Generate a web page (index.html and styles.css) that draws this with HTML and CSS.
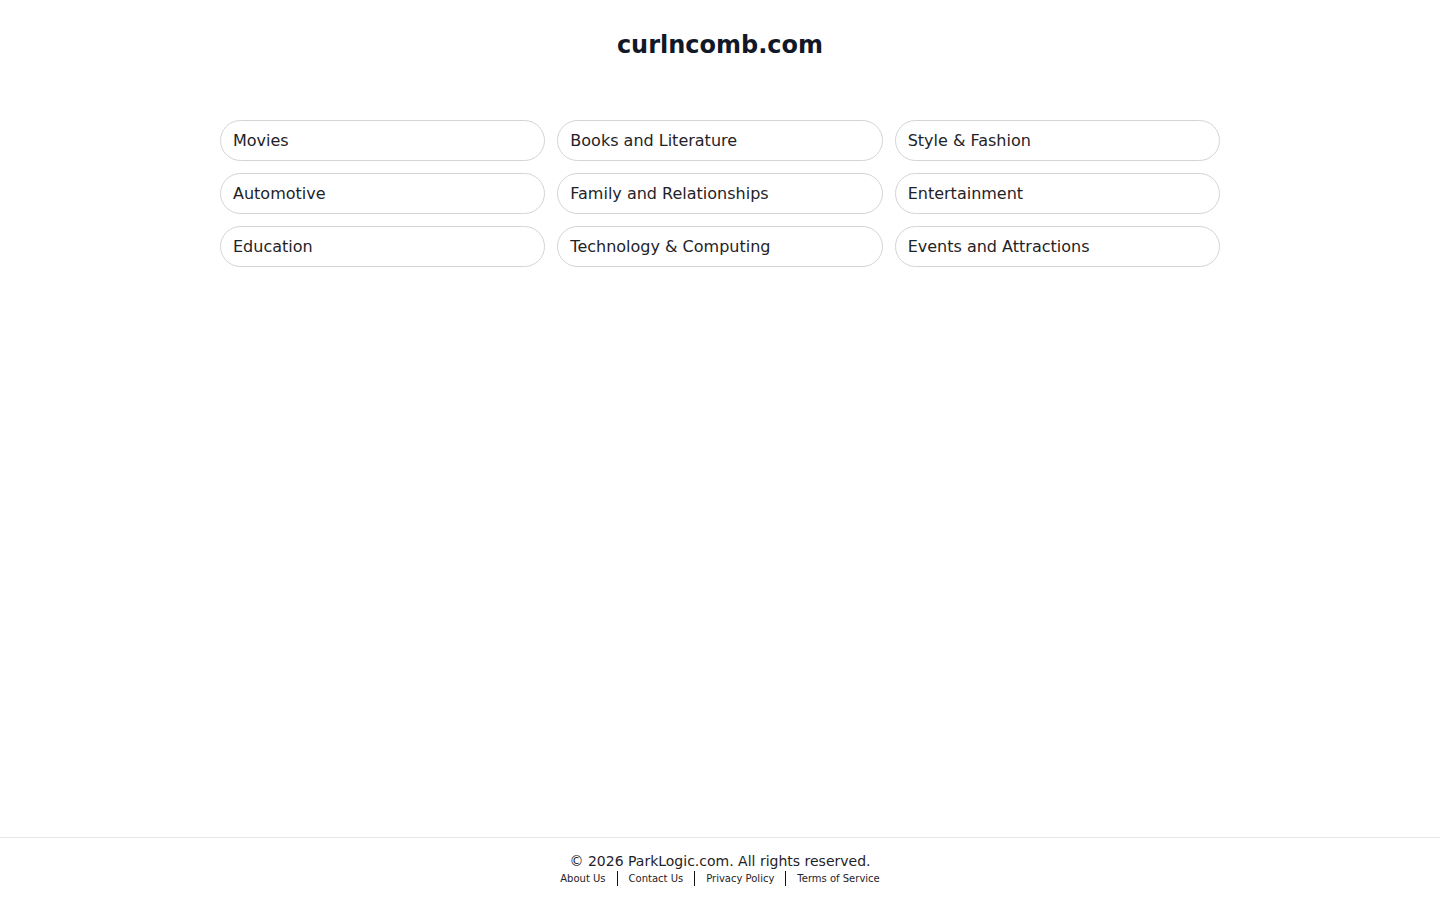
FILE: index.html
```html
<!DOCTYPE html>
<html lang="en">
<head>
<meta charset="utf-8">
<title>curlncomb.com</title>
<link rel="stylesheet" href="styles.css">
</head>
<body>
<div class="page">
  <header class="header">
    <h1 class="title">curlncomb.com</h1>
  </header>
  <main class="main">
    <div class="grid">
      <a class="pill" href="#">Movies</a>
      <a class="pill" href="#">Books and Literature</a>
      <a class="pill" href="#">Style &amp; Fashion</a>
      <a class="pill" href="#">Automotive</a>
      <a class="pill" href="#">Family and Relationships</a>
      <a class="pill" href="#">Entertainment</a>
      <a class="pill" href="#">Education</a>
      <a class="pill" href="#">Technology &amp; Computing</a>
      <a class="pill" href="#">Events and Attractions</a>
    </div>
  </main>
  <footer class="footer">
    <div class="copy">© 2026 ParkLogic.com. All rights reserved.</div>
    <div class="links">
      <a class="link" href="#">About Us</a>
      <a class="link" href="#">Contact Us</a>
      <a class="link" href="#">Privacy Policy</a>
      <a class="link" href="#">Terms of Service</a>
    </div>
  </footer>
</div>
</body>
</html>
```
FILE: styles.css
```css
* { box-sizing: border-box; }
html, body { margin: 0; padding: 0; }
body {
  font-family: "DejaVu Sans", sans-serif;
  color: #111827;
  background: #fff;
}
.page {
  min-height: 900px;
  display: flex;
  flex-direction: column;
}
.header {
  padding-top: 29px;
  text-align: center;
}
.title {
  margin: 0;
  font-size: 24px;
  line-height: 32px;
  font-weight: 700;
  color: #111827;
}
.main {
  flex: 1;
  padding-top: 59px;
}
.grid {
  width: 1000px;
  margin: 0 auto;
  display: grid;
  grid-template-columns: repeat(3, 1fr);
  column-gap: 12px;
  row-gap: 12px;
}
.pill {
  display: flex;
  align-items: center;
  height: 41px;
  padding: 0 12px;
  border: 1px solid #d4d4d8;
  border-radius: 21px;
  font-size: 16px;
  color: #1f2328;
  text-decoration: none;
}
.footer {
  border-top: 1px solid #e5e7eb;
  padding: 14px 0 14px;
  text-align: center;
}
.copy {
  font-size: 14px;
  line-height: 19px;
  color: #1f2328;
}
.links {
  display: flex;
  justify-content: center;
  align-items: center;
}
.link {
  font-size: 10px;
  line-height: 15px;
  color: #1f2328;
  text-decoration: none;
  padding: 0 11px;
  border-left: 1px solid #111;
}
.link:first-child { border-left: none; }
```
